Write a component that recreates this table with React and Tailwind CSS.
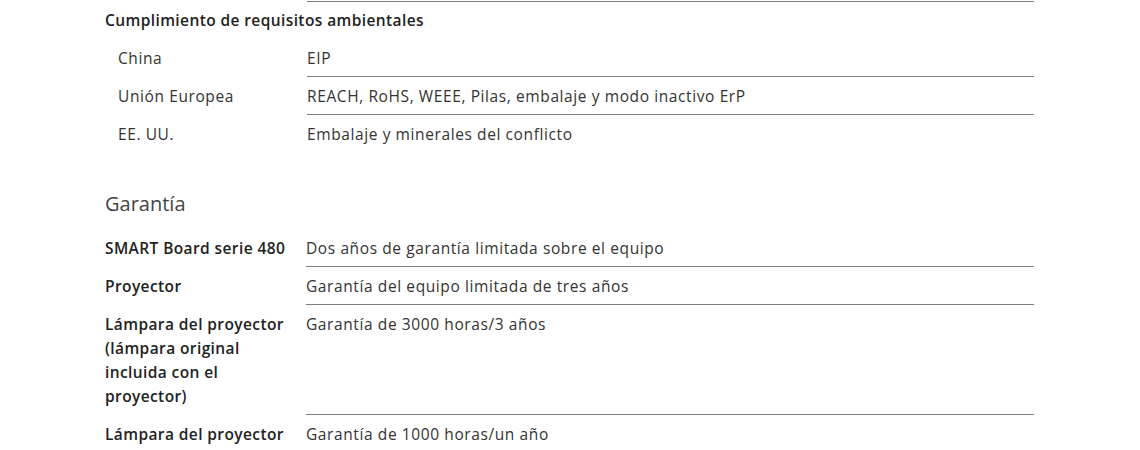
const envRows = [
  ["China", "EIP"],
  ["Unión Europea", "REACH, RoHS, WEEE, Pilas, embalaje y modo inactivo ErP"],
  ["EE. UU.", "Embalaje y minerales del conflicto"],
];

const warrantyRows = [
  ["SMART Board serie 480", "Dos años de garantía limitada sobre el equipo"],
  ["Proyector", "Garantía del equipo limitada de tres años"],
  ["Lámpara del proyector (lámpara original incluida con el proyector)", "Garantía de 3000 horas/3 años"],
  ["Lámpara del proyector", "Garantía de 1000 horas/un año"],
];

export default function App() {
  return (
    <div className="h-[450px] w-[1140px] overflow-hidden bg-white pl-[105px] text-[15.5px] leading-6 tracking-[0.6px] text-[#333]" style={{ fontFamily: "'Open Sans', 'Liberation Sans', sans-serif" }}>
      <div className="ml-[202px] mt-px w-[727px] border-b border-[#7d7d7d]" />

      <h3 className="mt-[6px] font-semibold tracking-[0.4px] text-[#222]">Cumplimiento de requisitos ambientales</h3>
      <div className="mt-[7px] pl-[13px]">
        {envRows.map(([label, value], i) => (
          <div key={label} className="flex">
            <div className="w-[189px] shrink-0 py-[7px]">{label}</div>
            <div className={`w-[727px] pt-[7px] ${i < envRows.length - 1 ? "border-b border-[#7d7d7d] pb-[6px]" : "pb-[7px]"}`}>{value}</div>
          </div>
        ))}
      </div>

      <h2 className="mt-[37px] text-[20px] leading-7 tracking-normal text-[#444]">Garantía</h2>
      <div className="mt-[11px]">
        {warrantyRows.map(([label, value], i) => (
          <div key={i} className="flex">
            <div className="w-[201px] shrink-0 py-[7px] pr-2 font-semibold tracking-[0.4px] text-[#222]">{label}</div>
            <div className={`w-[728px] pt-[7px] ${i < warrantyRows.length - 1 ? "border-b border-[#7d7d7d] pb-[6px]" : "pb-[7px]"}`}>{value}</div>
          </div>
        ))}
      </div>
    </div>
  );
}
